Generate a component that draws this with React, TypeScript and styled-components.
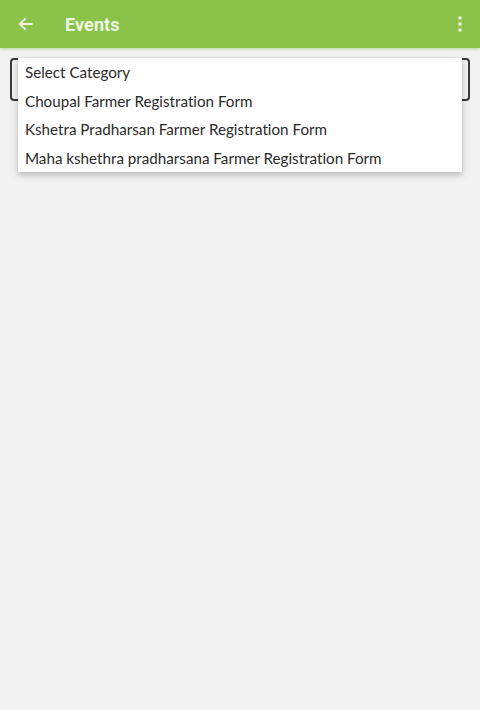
import React from "react";
import styled, { createGlobalStyle } from "styled-components";

const Global = createGlobalStyle`
  html, body {
    margin: 0;
    padding: 0;
    background: #f2f2f2;
  }
  body {
    font-family: Lato, "Open Sans", sans-serif;
  }
`;

const Screen = styled.div`
  width: 480px;
  height: 710px;
  background: #f2f2f2;
  display: flex;
  flex-direction: column;
  overflow: hidden;
`;

const AppBar = styled.header`
  height: 48px;
  flex: none;
  background: #8bc34a;
  display: flex;
  align-items: center;
  padding: 0 8px 0 14px;
  box-shadow: 0 2px 2px rgba(139, 195, 74, 0.35);
  position: relative;
  z-index: 2;
`;

const IconButton = styled.button`
  width: 24px;
  height: 24px;
  padding: 0;
  border: none;
  background: none;
  display: flex;
  align-items: center;
  justify-content: center;
  color: #eef6e2;
`;

const Title = styled.h1`
  margin: 0 0 0 27px;
  flex: 1;
  font-family: Roboto, "Noto Sans", sans-serif;
  font-weight: 700;
  font-size: 18px;
  color: #eef6e2;
  letter-spacing: 0.1px;
`;

const Content = styled.main`
  padding: 10px 10px 0;
`;

const SpinnerBox = styled.div`
  position: relative;
  height: 43px;
  border: 2px solid #3a3a3a;
  border-radius: 4px;
  box-sizing: border-box;
`;

const Menu = styled.ul`
  position: absolute;
  top: -2px;
  left: 6px;
  right: 6px;
  margin: 0;
  padding: 0;
  list-style: none;
  background: #ffffff;
  box-shadow: 0 3px 7px rgba(0, 0, 0, 0.22), 0 0 2px rgba(0, 0, 0, 0.1);
`;

const Option = styled.li`
  height: 28.6px;
  display: flex;
  align-items: center;
  padding: 0 7px;
  font-size: 15.2px;
  font-variant-ligatures: none;
  color: #2a2a2a;
  white-space: nowrap;
`;

const options = [
  "Select Category",
  "Choupal Farmer Registration Form",
  "Kshetra Pradharsan Farmer Registration Form",
  "Maha kshethra pradharsana Farmer Registration Form",
];

export default function App() {
  return (
    <Screen>
      <Global />
      <AppBar>
        <IconButton aria-label="Back">
          <svg width="18" height="18" viewBox="0 0 24 24" fill="none" stroke="currentColor" strokeWidth="2.4" strokeLinecap="round" strokeLinejoin="round">
            <path d="M20 12H4" />
            <path d="M11 5l-7 7 7 7" />
          </svg>
        </IconButton>
        <Title>Events</Title>
        <IconButton aria-label="More">
          <svg width="6" height="18" viewBox="0 0 6 18" fill="currentColor">
            <circle cx="3" cy="3" r="1.8" />
            <circle cx="3" cy="9" r="1.8" />
            <circle cx="3" cy="15" r="1.8" />
          </svg>
        </IconButton>
      </AppBar>
      <Content>
        <SpinnerBox>
          <Menu>
            {options.map((o) => (
              <Option key={o}>{o}</Option>
            ))}
          </Menu>
        </SpinnerBox>
      </Content>
    </Screen>
  );
}
